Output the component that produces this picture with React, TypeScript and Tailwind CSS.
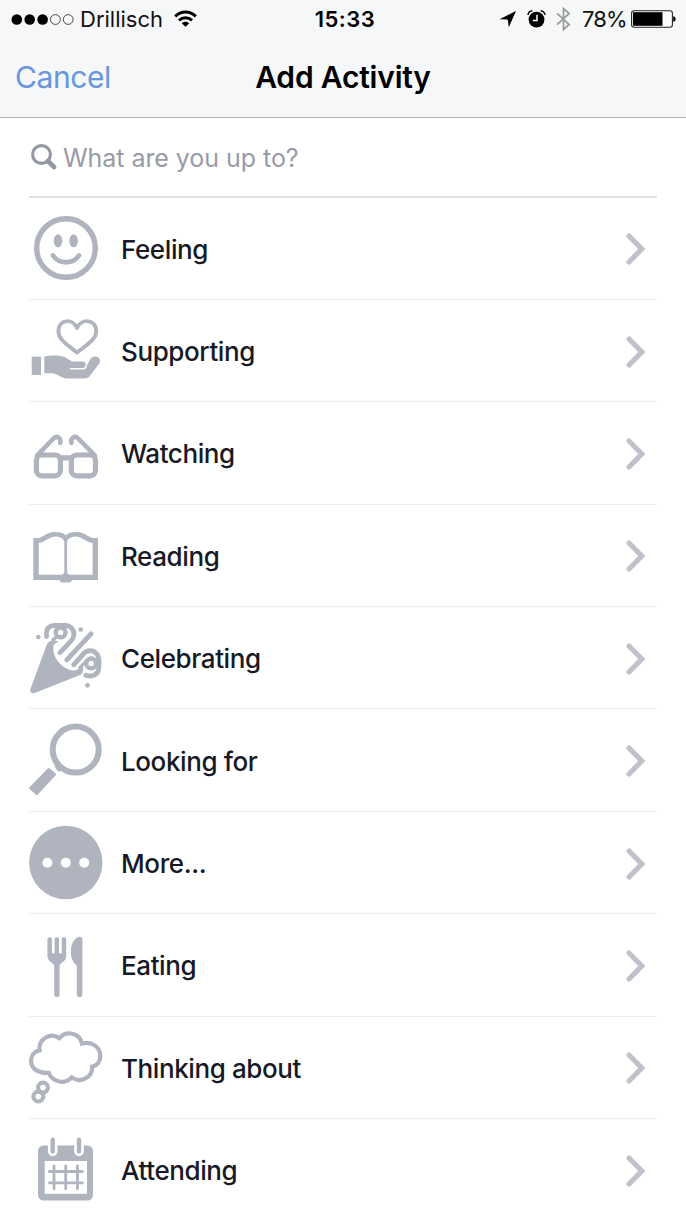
import { ReactNode } from 'react';

interface Activity {
  label: string;
  icon: ReactNode;
}

const activities: Activity[] = [
  {
    label: 'Feeling',
    icon: (
      <>
        <circle cx="37" cy="37" r="29.3" fill="none" stroke="currentColor" strokeWidth="5.4" />
        <ellipse cx="29" cy="29.8" rx="4.3" ry="6.5" />
        <ellipse cx="44.6" cy="29.8" rx="4.3" ry="6.5" />
        <path d="M24 44.5C30 53.5 44 53.5 50 44.5" fill="none" stroke="currentColor" strokeWidth="4.8" strokeLinecap="round" />
      </>
    ),
  },
  {
    label: 'Supporting',
    icon: (
      <>
        <path
          d="M48 14C44 4.4 29.4 4.6 29.4 17.4C29.4 26 39.5 31.4 48 38.6C56.5 31.4 67.2 26 67.2 17.4C67.2 4.6 52 4.4 48 14Z"
          fill="none"
          stroke="currentColor"
          strokeWidth="3.8"
          strokeLinejoin="round"
        />
        <path d="M2.7 42.6H12V60.9H2.7Z" />
        <path d="M15.3 42.4C22 41.2 29 41.2 34.5 42.8C39 44.2 40.5 47 44.5 47.5H53C56.2 47.5 57.5 49.5 57.6 51.8L61.8 44.6C65.8 39.8 73 43.8 70.6 48.9L61.5 61C59.5 63.6 58.3 64.4 55 64.4H38C31.5 64.4 28.5 59.4 22.5 59.3H15.3Z" />
        <path d="M41.5 54.8H53.5C56.5 54.8 57.8 53 57.2 50" fill="none" stroke="white" strokeWidth="1.5" strokeLinecap="round" />
      </>
    ),
  },
  {
    label: 'Watching',
    icon: (
      <g fill="none" stroke="currentColor" strokeWidth="5.2" strokeLinecap="round">
        <rect x="7.4" y="39" width="24" height="20.8" rx="5.5" />
        <rect x="42.3" y="39" width="24.2" height="20.8" rx="5.5" />
        <path d="M31.5 41.8H42.3" />
        <path d="M8 39.6L24.5 22.5C28 19 32.4 22.2 31.2 26.8" strokeWidth="4.6" />
        <path d="M66 39.6L49.2 22.5C45.7 19 41.3 22.2 42.5 26.8" strokeWidth="4.6" />
      </g>
    ),
  },
  {
    label: 'Reading',
    icon: (
      <path
        fillRule="evenodd"
        d="M4.3 20.1H10.5C17 16.5 20 14 25.5 14C30 14 33.5 14.6 36.7 17.2C39.9 14.6 43.4 14 47.9 14C53.4 14 56.4 16.5 62.9 20.1H69V61.9H43C42.2 64 41 64.6 39.5 64.6H33.9C32.4 64.6 31.2 64 30.4 61.9H4.3ZM9.8 56.8H32C34 56.8 35.1 55.8 35.3 54V23.2C33.5 19 27 17.5 22.8 19.2C18 21.2 14 24.6 9.8 24.8ZM63.6 56.8H41.4C39.4 56.8 38.3 55.8 38.1 54V23.2C39.9 19 46.4 17.5 50.6 19.2C55.4 21.2 59.4 24.6 63.6 24.8Z"
      />
    ),
  },
  {
    label: 'Celebrating',
    icon: (
      <>
        <path d="M1.4 68L17.8 23.8Q19.4 19.6 24.6 19.2L30 20.4C26.5 21.8 24.3 23 24.2 26.8C24 36.4 31 45.4 40.4 48.8C45 50.4 49.8 48.8 54 45.2C54 48.8 55 51.6 51 54L6.4 71.8C2.6 73 0.4 71.4 1.4 68Z" />
        <g fill="none" stroke="currentColor" strokeWidth="4.8" strokeLinecap="round">
          <path d="M17.6 15.6C16.4 6.4 21 4.3 26.4 4.3H36C42.6 4.3 45.8 10 44.6 15.6C44 19 36 26.4 31 31.5" />
          <circle cx="31.6" cy="11.4" r="4.9" strokeWidth="4.4" />
          <path d="M62 12.8L37.8 38.8" />
          <path d="M44.6 43.8L54 33.4C57.6 28.4 64.4 28.4 68.3 33.6C71 37.6 70 43.6 69.6 48C69 54.8 62 56 56.8 54.2" />
          <circle cx="62.2" cy="42.4" r="4.9" strokeWidth="4.4" />
          <path d="M57.8 39.6L50.8 46.6M27.6 16.2L24 18.6" strokeWidth="3.4" />
        </g>
        <circle cx="9.3" cy="16" r="2.3" />
        <circle cx="51.7" cy="8.5" r="2.3" />
        <circle cx="58.5" cy="64.3" r="2.4" />
      </>
    ),
  },
  {
    label: 'Looking for',
    icon: (
      <>
        <circle cx="46.7" cy="26.6" r="23" fill="none" stroke="currentColor" strokeWidth="6" />
        <path d="M25.5 43.2L28.6 39.8L34.4 45.6L31 48.8L28.3 47.8Z" />
        <path d="M18.8 45.4Q19.8 44.4 20.9 45.4L26.6 50.6Q27.5 51.6 26.5 52.6L8.8 71.4Q7.7 72.5 6.6 71.5L0.7 66Q-0.3 65 0.7 63.9Z" />
      </>
    ),
  },
  {
    label: 'More...',
    icon: (
      <>
        <circle cx="36.8" cy="36.5" r="36.7" />
        <g fill="white">
          <circle cx="18.4" cy="36.8" r="5" />
          <circle cx="36.8" cy="36.8" r="5" />
          <circle cx="55.2" cy="36.8" r="5" />
        </g>
      </>
    ),
  },
  {
    label: 'Eating',
    icon: (
      <>
        <path d="M18.4 11.2C18.4 8.6 22.9 8.6 22.9 11.2V25.2H25.6V11.2C25.6 8.6 30 8.6 30 11.2V25.2H32.7V11.2C32.7 8.6 37.2 8.6 37.2 11.2V28C37.2 33 33 34 30.6 37V66.4C30.6 69.8 25.2 69.8 25.2 66.4V37C22.8 34 18.4 33 18.4 28Z" />
        <path d="M53.4 11.4V66.4C53.4 69.8 47.8 69.8 47.8 66.4V37.6C43.2 33.6 41.8 28.8 41.8 24C41.8 17.6 44 11.6 48.4 9.4C51 8.2 53.4 9 53.4 11.4Z" />
      </>
    ),
  },
  {
    label: 'Thinking about',
    icon: (
      <g fill="none" stroke="currentColor" strokeWidth="4.2">
        <path d="M10.6 20.4A12.6 12.6 0 0 1 30.3 8.2A13 13 0 0 1 53 13.6C62.5 10.8 71.3 17 71.3 26C71.3 31.4 68.2 35.6 63.2 36.6A12.8 12.8 0 0 1 42.8 47.4C36.5 54.4 23.8 53 19.6 42.8C9.8 43.6 2 38.8 2 31C2 25.6 5 21.4 10.6 20.4Z" />
        <circle cx="14" cy="57.6" r="4.9" />
        <circle cx="9.3" cy="66.6" r="4.9" />
      </g>
    ),
  },
  {
    label: 'Attending',
    icon: (
      <>
        <rect x="9" y="12.5" width="55" height="55" rx="5.5" />
        <rect x="15.7" y="28" width="42.3" height="32.8" fill="white" />
        <g fill="none" strokeLinecap="round">
          <path d="M23.7 9V18.4M50 9V18.4" stroke="white" strokeWidth="9.6" />
          <path d="M23.7 6.8V18.4M50 6.8V18.4" stroke="currentColor" strokeWidth="4.4" />
          <path d="M25 32.8V55.8M36.7 32.8V55.8M48.4 32.8V55.8M20.4 38.5H53.4M20.4 49.8H53.4" stroke="currentColor" strokeWidth="2.8" />
        </g>
      </>
    ),
  },
];

function StatusBar() {
  return (
    <div className="flex h-[38px] items-center text-[22px] leading-none text-[#111]">
      <div className="flex w-[300px] items-center pl-[11px]">
        <svg className="h-[13px] w-[64px]" viewBox="0 0 64 13">
          <circle cx="5.8" cy="6.5" r="5.3" />
          <circle cx="18.7" cy="6.5" r="5.3" />
          <circle cx="31.6" cy="6.5" r="5.3" />
          <circle cx="44.4" cy="6.5" r="4.9" fill="none" stroke="#333" strokeWidth="0.9" />
          <circle cx="57.2" cy="6.5" r="4.9" fill="none" stroke="#333" strokeWidth="0.9" />
        </svg>
        <span className="ml-[5px] w-[94px]">Drillisch</span>
        <svg className="h-[18px] w-[23px]" viewBox="0 0 23 18" fill="none" stroke="black" strokeWidth="2.9">
          <path d="M1.2 6.4C7 0.6 16 0.6 21.8 6.4" />
          <path d="M5 10.4C8.8 6.8 14.2 6.8 18 10.4" />
          <path d="M7.8 13.2C10 11.2 13 11.2 15.2 13.2L11.5 16.8Z" fill="black" stroke="none" />
        </svg>
      </div>
      <div className="w-[90px] text-center text-[22px] font-semibold tracking-[0.45px] text-black">15:33</div>
      <div className="flex flex-1 items-center justify-end pr-[10px]">
        <svg className="h-[18px] w-[18px]" viewBox="0 0 18 18">
          <path d="M0.5 9.3L17 1L9.8 17.3L8.7 9.6Z" />
        </svg>
        <svg className="ml-[10px] h-[19px] w-[19px]" viewBox="0 0 19 19">
          <circle cx="9.5" cy="9.6" r="7.9" />
          <path d="M1 5C1.4 2.6 3 1 5.4 0.8M18 5C17.6 2.6 16 1 13.6 0.8" fill="none" stroke="black" strokeWidth="1.5" />
          <path d="M10 4.8V10.4H5.8" fill="none" stroke="white" strokeWidth="1.5" />
        </svg>
        <svg className="ml-[10px] h-[25px] w-[15px]" viewBox="0 0 15 25" fill="none" stroke="#999a9c" strokeWidth="1.7">
          <path d="M1 6.3L13.2 17.5L7.5 22.5V1.5L13.2 6.5L1 17.7" />
        </svg>
        <span className="ml-[11px] w-[49px] whitespace-nowrap tracking-[-0.9px]">78%</span>
        <svg className="h-[18px] w-[45px]" viewBox="0 0 45 18">
          <rect x="0.6" y="0.8" width="40.8" height="16.4" rx="2.4" fill="white" stroke="#222" strokeWidth="1.1" />
          <rect x="2" y="2.2" width="29.5" height="13.6" />
          <path d="M42.2 6.2Q44.7 6.4 44.7 9T42.2 11.8Z" />
        </svg>
      </div>
    </div>
  );
}

function Header() {
  return (
    <header className="h-[118px] border-b border-[#b3b4b8] bg-[#f5f7f9]">
      <StatusBar />
      <div className="grid h-[78px] grid-cols-[1fr_auto_1fr] items-center px-[15px]">
        <button className="text-left text-[30px] tracking-[-0.4px] text-[#6896de]">Cancel</button>
        <h1 className="text-[30px] font-semibold tracking-[-0.2px] text-black">Add Activity</h1>
      </div>
    </header>
  );
}

function ActivityRow({ label, icon }: Activity) {
  return (
    <li className="flex h-[102.4px] items-center border-b border-[#eeeef0]">
      <svg className="h-[74px] w-[74px] shrink-0 overflow-visible text-[#b0b4be]" viewBox="0 0 74 74" fill="currentColor" aria-hidden="true">
        {icon}
      </svg>
      <span className="ml-[18px] flex-1 pt-[2px] text-[26px] font-medium tracking-[-0.4px] text-[#171925]">{label}</span>
      <svg className="mt-[2px] mr-[11px] h-[34px] w-[22px]" viewBox="0 0 22 34" fill="none" stroke="#bfc2ca" strokeWidth="5.2" strokeLinecap="round" aria-hidden="true">
        <path d="M5 4L17.8 17L5 30" />
      </svg>
    </li>
  );
}

export default function App() {
  return (
    <div className="h-[1220px] w-[686px] overflow-hidden bg-white font-['Inter',sans-serif]">
      <Header />
      <main className="px-[29px]">
        <div className="flex h-[79.5px] items-center border-b-2 border-[#e0e1e3]">
          <svg className="mt-[1px] ml-[2px] h-[26px] w-[26px]" viewBox="0 0 26 26" fill="none" stroke="#9297a1" aria-hidden="true">
            <circle cx="10.5" cy="10.5" r="8.9" strokeWidth="3.1" />
            <path d="M17 17L23 23" strokeWidth="4.6" strokeLinecap="round" />
          </svg>
          <span className="ml-[6px] pt-[3px] text-[25px] tracking-[-0.05px] text-[#979ba5]">What are you up to?</span>
        </div>
        <ul>
          {activities.map((activity) => (
            <ActivityRow key={activity.label} {...activity} />
          ))}
        </ul>
      </main>
    </div>
  );
}
